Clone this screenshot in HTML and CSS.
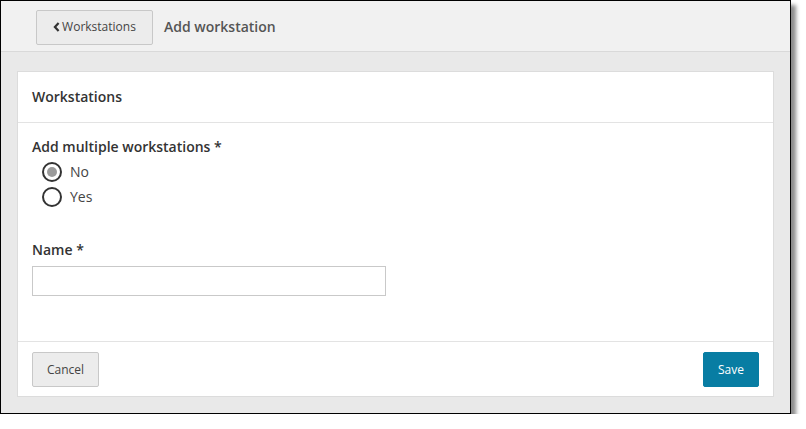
FILE: index.html
```html
<!DOCTYPE html>
<html>
<head>
<meta charset="utf-8">
<link rel="stylesheet" href="styles.css">
</head>
<body>
<div class="frame">
  <div class="topbar">
    <button class="back-btn"><svg class="chev" width="7" height="10" viewBox="0 0 7 10"><path d="M5.6 1 L1.9 5 L5.6 9" fill="none" stroke="#333" stroke-width="2.2"/></svg>Workstations</button>
    <span class="page-title">Add workstation</span>
  </div>
  <div class="main">
    <div class="card">
      <div class="card-header">Workstations</div>
      <div class="card-body">
        <div class="field-label">Add multiple workstations *</div>
        <div class="radios">
          <label class="radio"><span class="circle checked"></span>No</label>
          <label class="radio"><span class="circle"></span>Yes</label>
        </div>
        <div class="field-label name-label">Name *</div>
        <div class="input"></div>
      </div>
      <div class="card-footer">
        <button class="btn cancel">Cancel</button>
        <button class="btn save">Save</button>
      </div>
    </div>
  </div>
</div>
</body>
</html>
```
FILE: styles.css
```css
* { box-sizing: border-box; }
html, body { margin: 0; padding: 0; background: #fff; }
body { font-family: "Open Sans", "Liberation Sans", sans-serif; color: #333; }
.frame {
  width: 791px;
  height: 414px;
  border: 1px solid #000;
  box-shadow: 5px 5px 4px rgba(0,0,0,0.45);
  display: flex;
  flex-direction: column;
  background: #e9e9e9;
}
.topbar {
  height: 51px;
  background: #f1f1f1;
  border-bottom: 1px solid #d9d9d9;
  display: flex;
  align-items: center;
  padding-left: 35px;
  padding-top: 1px;
  flex-shrink: 0;
}
.back-btn {
  height: 35px;
  width: 117px;
  margin-top: 1px;
  background: #ececec;
  border: 1px solid #c8c8c8;
  border-radius: 2px;
  font-family: inherit;
  font-size: 12px;
  color: #444;
  display: flex;
  align-items: center;
  justify-content: center;
  gap: 2px;
  padding: 0 0 1px 0;
}
.chev { margin-top: 1px; }
.page-title {
  margin-left: 11px;
  font-size: 14px;
  font-weight: 600;
  color: #555;
}
.main {
  flex: 1;
  padding: 19px 16px 16px 16px;
}
.card {
  background: #fff;
  border: 1px solid #dcdcdc;
  height: 100%;
  display: flex;
  flex-direction: column;
}
.card-header {
  height: 51px;
  border-bottom: 1px solid #e3e3e3;
  padding: 15px 0 0 14px;
  font-size: 14px;
  font-weight: 600;
  color: #333;
}
.card-body {
  flex: 1;
  padding: 14px 0 0 14px;
}
.field-label {
  font-size: 14px;
  font-weight: 600;
  color: #333;
  line-height: 19px;
}
.radios {
  margin-top: 3px;
  padding-left: 10px;
  display: flex;
  flex-direction: column;
}
.radio {
  display: flex;
  align-items: center;
  height: 25px;
  font-size: 14px;
  color: #444;
}
.circle {
  width: 20px;
  height: 20px;
  border: 2px solid #333;
  border-radius: 50%;
  margin-right: 8px;
  display: flex;
  align-items: center;
  justify-content: center;
}
.circle.checked::after {
  content: "";
  width: 10px;
  height: 10px;
  border-radius: 50%;
  background: #9b9b9b;
}
.name-label { margin-top: 31px; }
.input {
  margin-top: 7px;
  width: 354px;
  height: 30px;
  border: 1px solid #c9c9c9;
  background: #fff;
}
.card-footer {
  height: 55px;
  border-top: 1px solid #e3e3e3;
  display: flex;
  justify-content: space-between;
  align-items: flex-start;
  padding: 10px 14px 0 14px;
}
.btn {
  height: 35px;
  font-family: inherit;
  font-size: 12px;
  border-radius: 2px;
  padding: 0;
}
.cancel {
  width: 67px;
  background: #ececec;
  border: 1px solid #c8c8c8;
  color: #444;
}
.save {
  width: 56px;
  background: #087da3;
  border: 1px solid #087da3;
  color: #fff;
}
```
